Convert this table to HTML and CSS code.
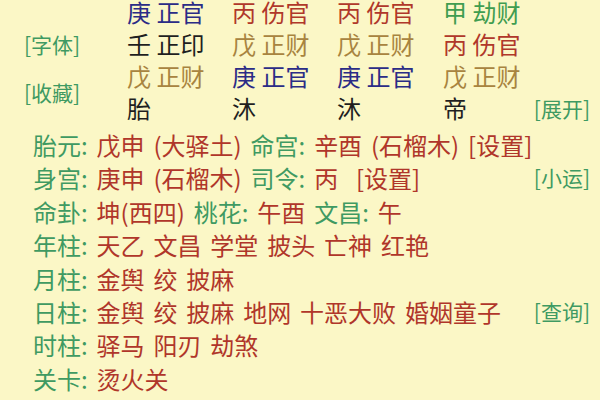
FILE: index.html
```html
<!DOCTYPE html>
<html lang="zh">
<head>
<meta charset="utf-8">
<link rel="stylesheet" href="styles.css">
</head>
<body>
<div class="page">
  <div class="pillars">
    <div class="btn side l1">[字体]</div>
    <div class="btn side l2">[收藏]</div>

    <div class="cell r1 c1 blue">庚 正官</div>
    <div class="cell r1 c2 red">丙 伤官</div>
    <div class="cell r1 c3 red">丙 伤官</div>
    <div class="cell r1 c4 green">甲 劫财</div>

    <div class="cell r2 c1 black">壬 正印</div>
    <div class="cell r2 c2 tan">戊 正财</div>
    <div class="cell r2 c3 tan">戊 正财</div>
    <div class="cell r2 c4 red">丙 伤官</div>

    <div class="cell r3 c1 tan">戊 正财</div>
    <div class="cell r3 c2 blue">庚 正官</div>
    <div class="cell r3 c3 blue">庚 正官</div>
    <div class="cell r3 c4 tan">戊 正财</div>

    <div class="cell r4 c1 black">胎</div>
    <div class="cell r4 c2 black">沐</div>
    <div class="cell r4 c3 black">沐</div>
    <div class="cell r4 c4 black">帝</div>
    <div class="btn r4 c5">[展开]</div>
  </div>

  <div class="info">
    <div class="line"><span><span class="k">胎元:</span> <span class="v">戊申 (大驿土)</span> <span class="k">命宫:</span> <span class="v">辛酉 (石榴木) [设置]</span></span></div>
    <div class="line"><span><span class="k">身宫:</span> <span class="v">庚申 (石榴木)</span> <span class="k">司令:</span> <span class="v">丙&nbsp; [设置]</span></span><span class="btn">[小运]</span></div>
    <div class="line"><span><span class="k">命卦:</span> <span class="v">坤(西四)</span> <span class="k">桃花:</span> <span class="v">午酉</span> <span class="k">文昌:</span> <span class="v">午</span></span></div>
    <div class="line"><span><span class="k">年柱:</span> <span class="v">天乙 文昌 学堂 披头 亡神 红艳</span></span></div>
    <div class="line"><span><span class="k">月柱:</span> <span class="v">金舆 绞 披麻</span></span></div>
    <div class="line"><span><span class="k">日柱:</span> <span class="v">金舆 绞 披麻 地网 十恶大败 婚姻童子</span></span><span class="btn">[查询]</span></div>
    <div class="line"><span><span class="k">时柱:</span> <span class="v">驿马 阳刃 劫煞</span></span></div>
    <div class="line"><span><span class="k">关卡:</span> <span class="v">烫火关</span></span></div>
  </div>
</div>
</body>
</html>
```

FILE: styles.css
```css
html, body {
  margin: 0;
  padding: 0;
  background: #fbf7c6;
}
body {
  width: 600px;
  height: 400px;
  overflow: hidden;
  font-family: "Noto Sans CJK SC", "Noto Sans", sans-serif;
  font-size: 24px;
  color: #222;
}
.page {
  width: 600px;
  height: 400px;
  overflow: hidden;
}
.pillars {
  display: grid;
  grid-template-columns: 127px 105px 105px 106px 1fr;
  grid-template-rows: repeat(4, 32px);
  margin-top: -4px;
  line-height: 32px;
}
.cell { white-space: pre; }
.r1 { grid-row: 1; }
.r2 { grid-row: 2; }
.r3 { grid-row: 3; }
.r4 { grid-row: 4; }
.c1 { grid-column: 2; }
.c2 { grid-column: 3; }
.c3 { grid-column: 4; }
.c4 { grid-column: 5; }
.c5 { grid-column: 5; justify-self: end; padding-right: 10px; }
.side {
  grid-column: 1;
  padding-left: 24px;
  align-self: center;
}
.l1 { grid-row: 2; }
.l2 { grid-row: 3 / span 2; }

.blue { color: #2b2c86; }
.red { color: #b0382a; }
.green { color: #3f9d50; }
.tan { color: #a8843f; }
.black { color: #1f1f1f; }

.btn {
  color: #3f9a62;
  font-size: 21px;
  white-space: nowrap;
  word-spacing: 0;
}
.info {
  padding: 4px 10px 0 33px;
  display: flex;
  flex-direction: column;
}
.line {
  display: flex;
  justify-content: space-between;
  align-items: center;
  height: 33.4px;
  line-height: 33.4px;
  white-space: pre;
  word-spacing: 3.5px;
}
.k { color: #3f9a62; }
.v { color: #b0362a; }
```
